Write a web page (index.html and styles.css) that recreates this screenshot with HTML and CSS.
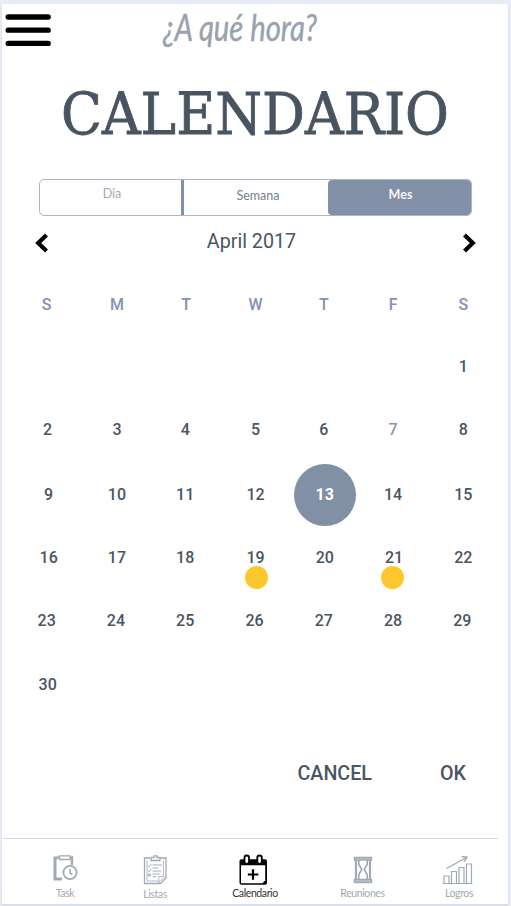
FILE: index.html
```html
<!DOCTYPE html>
<html lang="es">
<head>
<meta charset="utf-8">
<title>Calendario</title>
<link rel="stylesheet" href="styles.css">
</head>
<body>
<main class="screen">
  <header class="top">
    <svg class="menu" viewBox="0 0 48 34"><path d="M4.200 4H44.200M4.200 17.200H44.200M4.200 30.400H44.200"/></svg>
    <svg class="brand" viewBox="0 0 170 52">
      <text x="10" y="37" textLength="154" lengthAdjust="spacingAndGlyphs">¿A qué hora?</text>
    </svg>
  </header>
  <h1><svg class="title" viewBox="0 0 400 60"><text x="4" y="51.700" textLength="388" lengthAdjust="spacingAndGlyphs">CALENDARIO</text></svg></h1>
  <nav class="tabs"><div class="tab day">Dia</div><div class="tab week">Semana</div><div class="tab month">Mes</div></nav>
  <div class="period">
    <svg class="arrow" viewBox="0 0 14 20"><path d="M11.500 2L3.200 10L11.500 18"/></svg>
    <span>April 2017</span>
    <svg class="arrow" viewBox="0 0 14 20"><path d="M2.500 2L10.800 10L2.500 18"/></svg>
  </div>
  <section class="calendar">
    <div class="row names"><b class="l1">S</b><b>M</b><b>T</b><b>W</b><b class="l1">T</b><b class="l1">F</b><b>S</b></div>
    <div class="row"><span></span><span></span><span></span><span></span><span></span><span></span><span>1</span></div>
    <div class="row"><span>2</span><span>3</span><span class="l1">4</span><span>5</span><span class="l1">6</span><span class="muted l1">7</span><span>8</span></div>
    <div class="row"><span class="r1">9</span><span>10</span><span class="l1">11</span><span>12</span><span class="selected">13</span><span class="l1">14</span><span>15</span></div>
    <div class="row"><span class="r1">16</span><span>17</span><span class="l1">18</span><span class="event">19</span><span>20</span><span class="event last">21</span><span>22</span></div>
    <div class="row"><span class="l1">23</span><span class="l1">24</span><span class="l1">25</span><span class="l1">26</span><span class="l1">27</span><span class="l1">28</span><span class="l1">29</span></div>
    <div class="row"><span>30</span><span></span><span></span><span></span><span></span><span></span><span></span></div>
  </section>
  <div class="actions"><span>CANCEL</span><span>OK</span></div>
  <footer class="bottom">
    <div class="item"><svg viewBox="0 0 34 34"><path d="M9 4H7V25H14" stroke-width="3"/><path d="M9 3.500H24V11" stroke-width="2.400"/><path d="M11.500 1.800h10.500v3.700H11.500z" fill="#fff" stroke-width="1.300"/><circle cx="22" cy="18.500" r="6.600" fill="#fff" stroke-width="1.800"/><path d="M22 15v4l2.300 1.500" stroke-width="1.500"/></svg><span>Task</span></div>
    <div class="item lists"><svg viewBox="0 0 34 34"><path d="M12 4H6.500V29.500H22.500L28 24V4H22M13 6.500V3.500h3V1.800h3v1.700h3v3z" stroke-width="1.300"/><path d="M9 6.500V27H21M25.500 6.500V22.500H20.800V29M20.800 28l6-5" stroke-width=".8"/><path d="M10 11.500l1.200 1.300L13.300 10M14.500 11H24M10 16.500l1.200 1.300L13.300 15M14.500 14h6M14.500 17H23M10 20h2.500v1.800H10zM14.500 20h7M14.500 22.700h4" stroke-width="1"/></svg><span>Listas</span></div>
    <div class="item active"><svg viewBox="0 0 34 34"><rect x="3.500" y="5.200" width="27.500" height="25.500" rx="2" fill="#000" stroke="none"/><path d="M5 11.300H29.200V26.200L26.500 29.200H5Z" fill="#fff" stroke="none"/><rect x="8.500" y="1.500" width="4.500" height="8.300" rx="2.200" fill="#fff" stroke-width="1.800"/><rect x="21.300" y="1.500" width="4.500" height="8.300" rx="2.200" fill="#fff" stroke-width="1.800"/><path d="M17 15.200v10.500M11.800 20.500h10.500" stroke-width="2.200"/></svg><span>Calendario</span></div>
    <div class="item meetings"><svg viewBox="0 0 34 34"><path d="M8.500 3.500h17V6h-17zM8.500 25.500h17v3h-17z" fill="#bdc3ce" stroke-width="1.400"/><path d="M10 6v19M24 6v19" stroke-width="2.200"/><path d="M12.800 6v4.500l3 5-3 5V25M21.200 6v4.500l-3 5 3 5V25" stroke-width="1.600"/></svg><span>Reuniones</span></div>
    <div class="item goals"><svg viewBox="0 0 34 34"><path d="M.5 29.500H30.500M2 29v-7h5v7M9.500 29V17.500h5V29M17 29V13.500h5V29M24.500 29V10h5v19" stroke-width="1.200"/><path d="M4.500 14.500L24.500 3.500M19.500 2.500l5.500.5-3 5" stroke-width="1.400"/></svg><span>Logros</span></div>
  </footer>
</main>
</body>
</html>
```

FILE: styles.css
```css
* { box-sizing: border-box; }
body { margin: 0; width: 511px; height: 906px; padding: 4px 3px 2px 2px; background: #e9eef6; overflow: hidden; font-family: Roboto, sans-serif; color: #4a5563; }
.screen { height: 900px; background: #fff; display: flex; flex-direction: column; box-shadow: 0 1px 2px #c9d2e2; }
svg { display: block; overflow: visible; fill: none; }
.top { height: 78px; display: flex; align-items: flex-start; }
.menu { width: 48px; height: 34px; margin: 9px 0 0 2px; stroke: #000; stroke-width: 5.300; stroke-linecap: round; }
.brand { width: 170px; height: 52px; margin-left: 101px; }
.brand text { font: italic 36px Lato, sans-serif; fill: #98a2ae; stroke: #98a2ae; stroke-width: .4px; }
h1 { margin: 0 0 0 55px; height: 97px; }
.title { width: 400px; height: 60px; }
.title text { font: 57px "DejaVu Serif", serif; fill: #495461; stroke: #495461; stroke-width: .8px; }
.tabs { width: 433px; height: 37px; margin-left: 37px; display: grid; grid-template-columns: 144px 144px 143px; border: 1px solid #aab5c8; border-radius: 5px; font: 12.500px/30px Lato, sans-serif; text-align: center; overflow: hidden; }
.day { border-right: 3px solid #8290a7; color: #a2aab5; line-height: 28px; padding-left: 3px; }
.week { color: #758190; padding-left: 4px; line-height: 32px; }
.month { background: #8290a7; color: #f4f6f9; font-weight: 700; font-size: 12.500px; line-height: 29px; padding-left: 2px; border-radius: 4px; }
.period { height: 50px; padding: 0 32px 0 33px; display: flex; justify-content: space-between; align-items: center; font-size: 19.700px; }
.period span { padding-right: 8px; }
.arrow { width: 14px; height: 20px; margin-top: 4px; stroke: #000; stroke-width: 4.200; }
.calendar { width: 485px; margin: 7px 0 0 11px; display: grid; grid-template-rows: 62px 62px 64px 66px 60px 66px 63px; }
.row { display: grid; grid-template-columns: repeat(7, 1fr); align-items: center; text-align: center; font-size: 16px; font-weight: 500; }
.names { color: #8492aa; }
.row b { font-weight: 500; }
.row > .r1 { padding-left: 2px; }
.row > .l1 { padding-right: 2px; }
.row > .muted { color: #8c98ab; }
.selected { width: 62px; height: 62px; line-height: 61px; border-radius: 50%; background: #8290a5; color: #fff; font-weight: 700; justify-self: center; margin-top: 1px; }
.event { position: relative; }
.event::after { content: ""; position: absolute; width: 23px; height: 23px; border-radius: 50%; background: #ffc72e; left: 24px; top: 18px; }
.last::after { left: 22px; }
.actions { height: 40px; margin: 37px 42px 0 0; display: flex; justify-content: flex-end; align-items: center; gap: 68px; font-size: 19.700px; font-weight: 500; }
.bottom { margin: auto 10px 0 1px; height: 66px; border-top: 1px solid #d3dbea; padding: 15px 0 0 13px; display: grid; grid-template-columns: 98px 82px 118px 97px 96px; }
.item { display: flex; flex-direction: column; align-items: center; font: 10.500px/14px Lato, sans-serif; color: #a1a9b5; letter-spacing: -.4px; }
.item svg { width: 34px; height: 34px; margin-bottom: -2px; stroke: #a1a9b7; flex: none; }
.lists span { padding-top: 1px; }
.active { color: #333; }
.active svg { margin-right: 4px; stroke: #000; }
```
